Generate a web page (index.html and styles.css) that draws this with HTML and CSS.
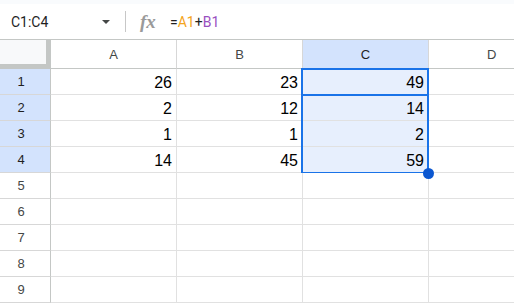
FILE: index.html
```html
<!DOCTYPE html>
<html>
<head>
  <title>Sheet</title>
  <link rel="stylesheet" href="styles.css">
</head>
<body>
  <div class="top-strip"></div>

  <div class="formula-bar">
    <div class="name-box">
      <span class="range-name">C1:C4</span>
      <span class="caret"></span>
    </div>
    <div class="divider"></div>
    <span class="fx">fx</span>
    <span class="formula">=<span class="ref-a">A1</span>+<span class="ref-b">B1</span></span>
  </div>

  <div class="sheet">
    <div class="grid">
      <div class="corner"></div>
      <div class="col-head">A</div>
      <div class="col-head">B</div>
      <div class="col-head selected">C</div>
      <div class="col-head cut">D</div>

      <div class="row-head selected">1</div>
      <div class="cell">26</div>
      <div class="cell">23</div>
      <div class="cell picked">49</div>
      <div class="cell"></div>

      <div class="row-head selected">2</div>
      <div class="cell">2</div>
      <div class="cell">12</div>
      <div class="cell picked">14</div>
      <div class="cell"></div>

      <div class="row-head selected">3</div>
      <div class="cell">1</div>
      <div class="cell">1</div>
      <div class="cell picked">2</div>
      <div class="cell"></div>

      <div class="row-head selected">4</div>
      <div class="cell">14</div>
      <div class="cell">45</div>
      <div class="cell picked">59</div>
      <div class="cell"></div>

      <div class="row-head">5</div>
      <div class="cell"></div><div class="cell"></div><div class="cell"></div><div class="cell"></div>

      <div class="row-head">6</div>
      <div class="cell"></div><div class="cell"></div><div class="cell"></div><div class="cell"></div>

      <div class="row-head">7</div>
      <div class="cell"></div><div class="cell"></div><div class="cell"></div><div class="cell"></div>

      <div class="row-head">8</div>
      <div class="cell"></div><div class="cell"></div><div class="cell"></div><div class="cell"></div>

      <div class="row-head">9</div>
      <div class="cell"></div><div class="cell"></div><div class="cell"></div><div class="cell"></div>
    </div>

    <!-- selection overlay -->
    <div class="range-box"></div>
    <div class="active-box"></div>
    <div class="fill-handle"></div>
  </div>
</body>
</html>
```

FILE: styles.css
```css
body {
  margin: 0;
  width: 514px;
  height: 305px;
  overflow: hidden;
  background-color: #fff;
  font-family: 'Liberation Sans', Arial, sans-serif;
  color: #1f1f1f;
}

.top-strip {
  height: 4px;
  background-color: #f9fbfd;
}

.formula-bar {
  display: flex;
  align-items: center;
  height: 36px;
  box-sizing: border-box;
  border-bottom: 1px solid #c4c7c5;
  font-family: Roboto, 'Liberation Sans', sans-serif;
  font-size: 14px;
}

.name-box {
  display: flex;
  align-items: center;
  justify-content: space-between;
  width: 114px;
  box-sizing: border-box;
  padding-left: 11px;
  padding-right: 4px;
}

.caret {
  width: 0;
  height: 0;
  border-left: 4px solid transparent;
  border-right: 4px solid transparent;
  border-top: 4px solid #444746;
}

.divider {
  width: 1px;
  height: 21px;
  margin-left: 11px;
  background-color: #c7c7c7;
}

.fx {
  width: 30px;
  margin-left: 14px;
  font-family: 'Liberation Serif', serif;
  font-style: italic;
  font-weight: bold;
  font-size: 19px;
  color: #9a9a9a;
}

.formula .ref-a {
  color: #f4a420;
}

.formula .ref-b {
  color: #9a4fbf;
}

.sheet {
  position: relative;
  overflow: hidden;
}

.grid {
  display: grid;
  grid-template-columns: 51px repeat(3, 126px) 86px;
  grid-template-rows: 29px repeat(9, 26px);
}

.grid > div {
  box-sizing: border-box;
  border-right: 1px solid #e1e1e1;
  border-bottom: 1px solid #e1e1e1;
}

.grid > .corner {
  background-color: #f8f9fa;
  border-right: 5px solid #c4c7c5;
  border-bottom: 5px solid #c4c7c5;
}

.grid > .col-head {
  display: flex;
  align-items: center;
  justify-content: center;
  font-size: 13px;
  color: #444746;
  border-right-color: #d7d7d7;
  border-bottom-color: #c4c7c5;
}

/* D is cut by the window edge, keep its label where the full column would put it */
.grid > .col-head.cut {
  justify-content: flex-start;
  padding-left: 58px;
  border-right: none;
}

.grid > .row-head {
  display: flex;
  align-items: center;
  justify-content: center;
  padding-right: 8px;
  font-size: 13px;
  color: #444746;
  border-right-color: #c4c7c5;
  border-bottom-color: #d7d7d7;
}

.grid > .selected {
  background-color: #d3e3fd;
  color: #1f1f1f;
}

.grid > .cell {
  text-align: right;
  padding: 3px 4px 0 0;
  line-height: 22px;
  font-size: 16px;
  color: #000;
}

.grid > .cell:nth-child(5n) {
  border-right: none;
}

.grid > .picked {
  background-color: #e7effd;
}

.range-box {
  position: absolute;
  left: 301px;
  top: 28px;
  width: 128px;
  height: 105px;
  box-sizing: border-box;
  border: 1px solid #1a73e8;
  border-left-width: 2px;
  border-right-width: 2px;
}

.active-box {
  position: absolute;
  left: 301px;
  top: 28px;
  width: 128px;
  height: 28px;
  box-sizing: border-box;
  border: 2px solid #1a73e8;
}

.fill-handle {
  position: absolute;
  left: 423px;
  top: 128px;
  width: 11px;
  height: 11px;
  border-radius: 50%;
  background-color: #0b57d0;
}
```
